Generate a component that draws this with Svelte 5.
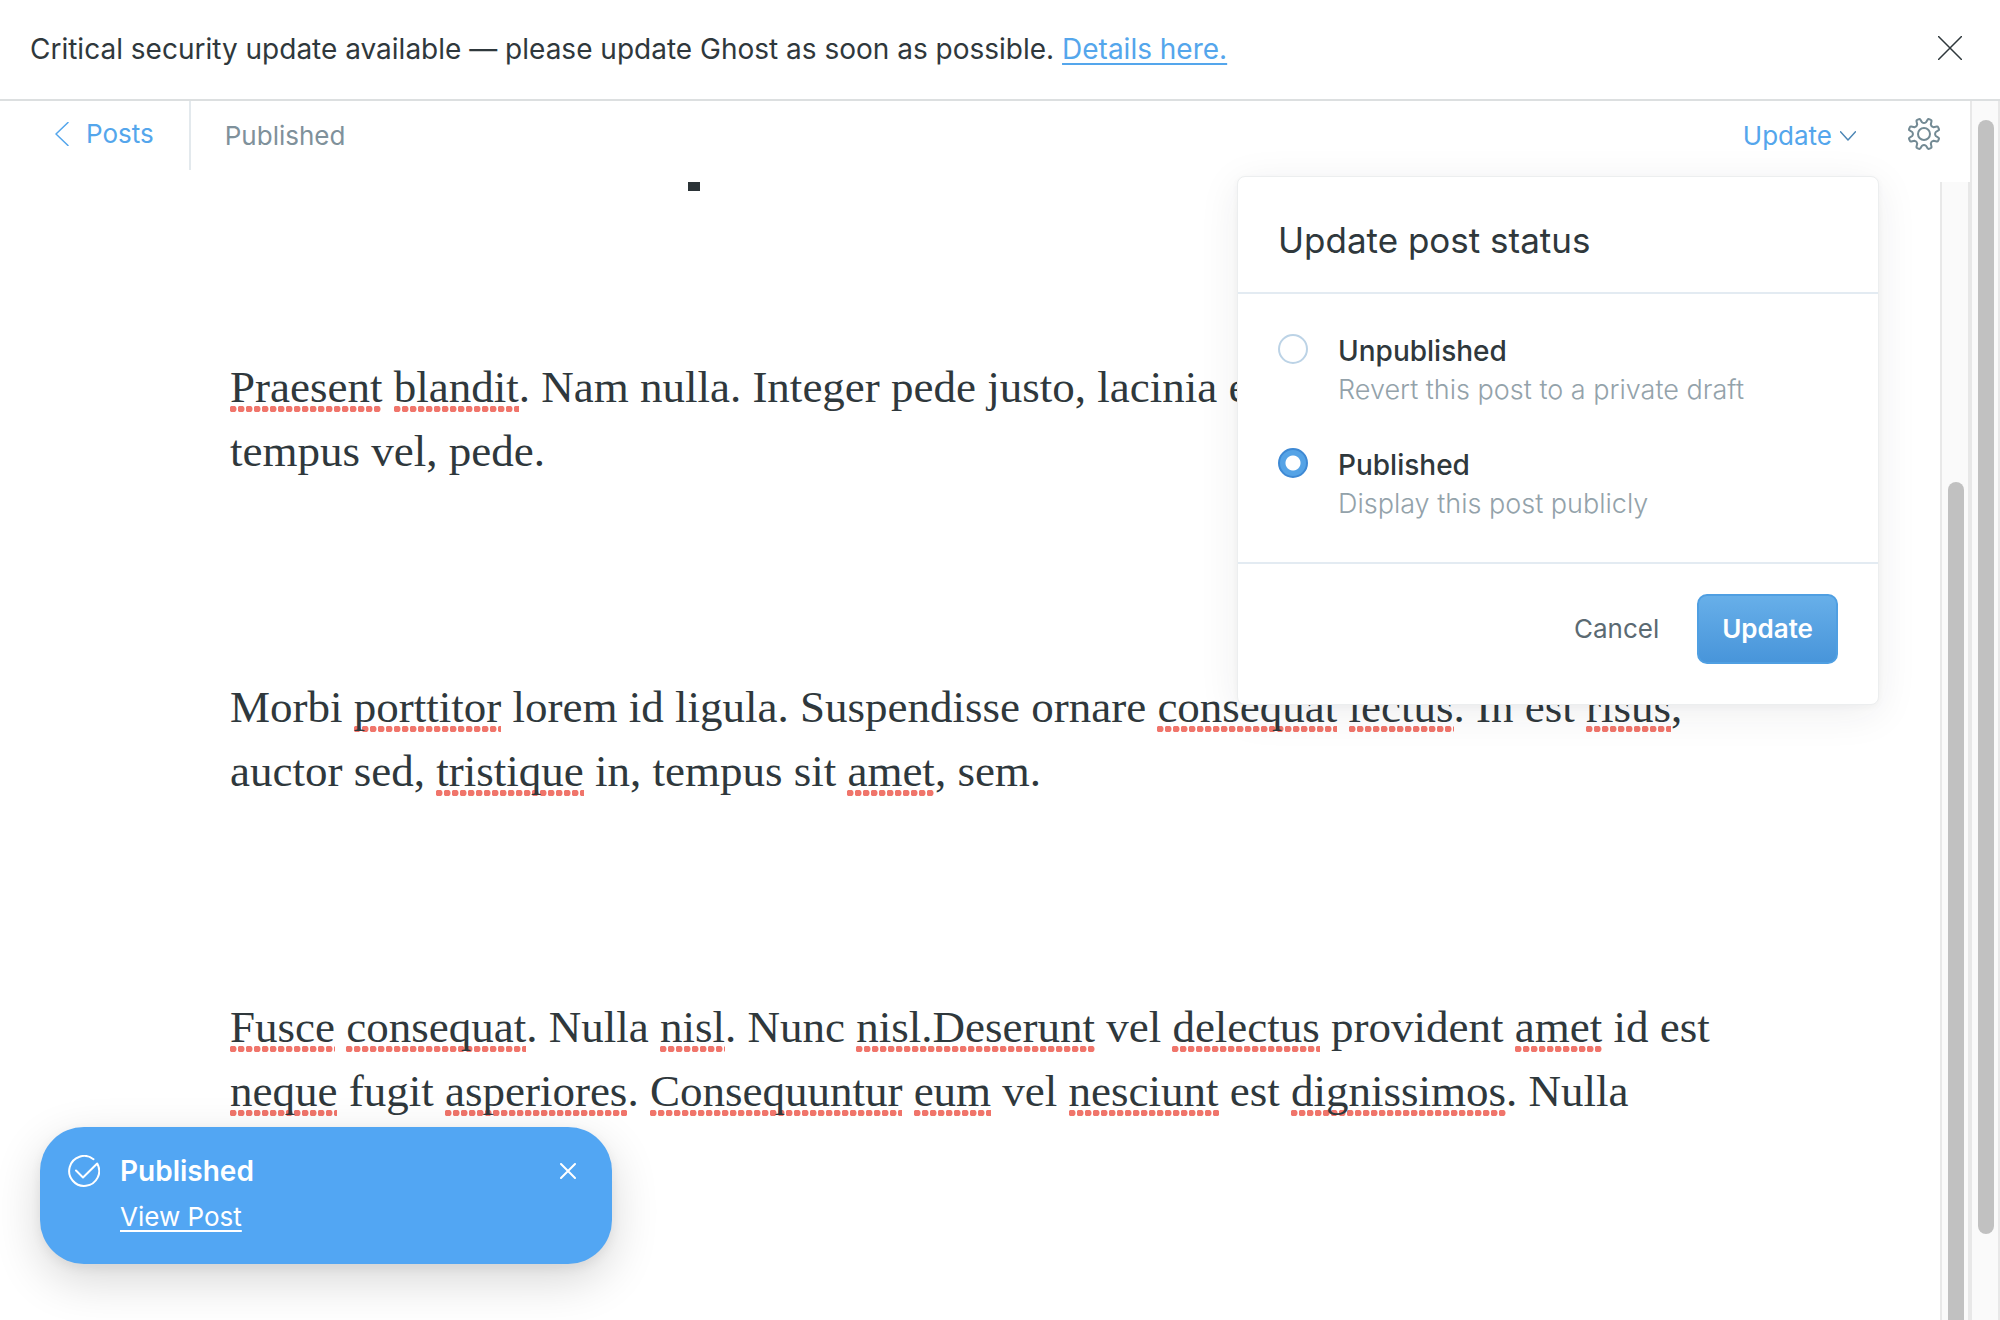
<script>
  let status = $state('published');

  const paragraphs = [
    [
      [['Praesent', 1], [' '], ['blandit', 1], ['. Nam nulla. Integer pede justo, lacinia eget, tincidunt eget,']],
      [['tempus vel, pede.']]
    ],
    [
      [['Morbi '], ['porttitor', 1], [' lorem id ligula. Suspendisse ornare '], ['consequat', 1], [' '], ['lectus', 1], ['. In est '], ['risus', 1], [',']],
      [['auctor sed, '], ['tristique', 1], [' in, tempus sit '], ['amet', 1], [', sem.']]
    ],
    [
      [['Fusce', 1], [' '], ['consequat', 1], ['. Nulla '], ['nisl', 1], ['. Nunc '], ['nisl.Deserunt', 1], [' vel '], ['delectus', 1], [' provident '], ['amet', 1], [' id est']],
      [['neque', 1], [' fugit '], ['asperiores', 1], ['. '], ['Consequuntur', 1], [' '], ['eum', 1], [' vel '], ['nesciunt', 1], [' est '], ['dignissimos', 1], ['. Nulla']]
    ]
  ];

  const options = [
    { value: 'unpublished', label: 'Unpublished', note: 'Revert this post to a private draft' },
    { value: 'published', label: 'Published', note: 'Display this post publicly' }
  ];
</script>

<div class="app">
  <aside class="banner">
    <p>Critical security update available — please update Ghost as soon as possible. <a href="#details">Details here.</a></p>
    <button class="icon-button" aria-label="Close alert">
      <svg class="thin" width="24" height="24" viewBox="0 0 24 24"><path d="M0.5 0.5l23 23M23.5 0.5l-23 23" /></svg>
    </button>
  </aside>

  <div class="workspace">
    <main class="editor">
      <header class="toolbar">
        <a class="back" href="#posts">
          <svg class="thin" width="14" height="24" viewBox="0 0 14 24"><path d="M13 0.5L1 12l12 11.500" /></svg>
          Posts
        </a>
        <span class="state">Published</span>
        <button class="update-trigger">
          Update
          <svg class="thin" width="16" height="10" viewBox="0 0 16 10"><path d="M0.5 0.8L8 9l7.500-8.200" /></svg>
        </button>
        <button class="icon-button gear" aria-label="Settings">
          <svg width="32" height="32" viewBox="0 0 32 32">
            <circle cx="16" cy="16" r="6" />
            <path d="M14 4.200L12.300 1.600Q11.900 .8 11 1.100L9.200 1.900Q8.300 2.300 8.500 3.200L9.200 6.500Q8.800 8.800 6.500 9.200L3.200 8.500Q2.300 8.300 1.900 9.200L1.100 11Q.8 11.900 1.600 12.300L4.200 14Q5.600 16 4.200 18L1.600 19.700Q.8 20.100 1.100 21L1.900 22.800Q2.300 23.700 3.200 23.500L6.500 22.800Q8.800 23.200 9.200 25.500L8.500 28.800Q8.300 29.700 9.200 30.100L11 30.900Q11.900 31.200 12.300 30.400L14 27.800Q16 26.400 18 27.800L19.700 30.400Q20.100 31.200 21 30.900L22.800 30.100Q23.700 29.700 23.500 28.800L22.800 25.500Q23.200 23.200 25.500 22.800L28.800 23.500Q29.700 23.700 30.100 22.800L30.900 21Q31.200 20.100 30.400 19.700L27.800 18Q26.400 16 27.800 14L30.400 12.300Q31.200 11.900 30.900 11L30.100 9.200Q29.700 8.300 28.800 8.500L25.500 9.200Q23.200 8.800 22.800 6.500L23.500 3.200Q23.700 2.300 22.800 1.900L21 1.100Q20.100 .8 19.700 1.600L18 4.200Q16 5.600 14 4.200Z" />
          </svg>
        </button>
      </header>

      <div class="scroller">
        <article class="content">
          <span class="mark"></span>
          {#each paragraphs as lines}
            <p>
              {#each lines as line}
                <span class="line">{#each line as [text, flagged]}<span class:flagged>{text}</span>{/each}</span>
              {/each}
            </p>
          {/each}
        </article>
        <div class="track inner"><div class="thumb"></div></div>
      </div>

      <form class="popup" onsubmit={(e) => e.preventDefault()}>
        <h2>Update post status</h2>
        <div class="options">
          {#each options as option}
            <label>
              <input type="radio" name="status" value={option.value} bind:group={status} />
              <span class="option-text">
                <strong>{option.label}</strong>
                <small>{option.note}</small>
              </span>
            </label>
          {/each}
        </div>
        <footer>
          <button type="button" class="cancel">Cancel</button>
          <button type="submit" class="primary">Update</button>
        </footer>
      </form>
    </main>
    <div class="track outer"><div class="thumb"></div></div>
  </div>

  <div class="toast" role="status">
    <svg width="32" height="32" viewBox="0 0 32 32"><path d="M25.500 4.200A15 15 0 1 0 29.200 8.500L15 22.500L8 15.500" /></svg>
    <div class="toast-text">
      <strong>Published</strong>
      <a href="#view">View Post</a>
    </div>
    <button class="icon-button" aria-label="Dismiss">
      <svg width="16" height="16" viewBox="0 0 16 16"><path d="M1 1l14 14M15 1l-14 14" /></svg>
    </button>
  </div>
</div>

<style>
  :global(body) {
    margin: 0;
    background: #fff;
  }
  .app {
    position: relative;
    display: flex;
    flex-direction: column;
    height: 100vh;
    overflow: hidden;
    color: #2f383c;
    font-family: Inter, 'Liberation Sans', sans-serif;
    font-size: 26px;
    line-height: 32px;
  }
  p, h2 {
    margin: 0;
    font-weight: 400;
  }
  button {
    padding: 0;
    border: 0;
    background: none;
    color: inherit;
    font: inherit;
    cursor: pointer;
  }
  svg {
    display: block;
    fill: none;
    stroke: currentColor;
    stroke-width: 2;
    stroke-linecap: round;
    stroke-linejoin: round;
  }
  .thin {
    stroke-width: 1.5;
  }
  a {
    color: #54a6ec;
    text-underline-offset: 4px;
    text-decoration-thickness: 2px;
  }
  .banner {
    display: flex;
    align-items: center;
    justify-content: space-between;
    padding: 32px 38px 32px 30px;
    border-bottom: 2px solid #dcdfe0;
    font-size: 28px;
    line-height: 35px;
  }
  .banner .icon-button {
    padding-bottom: 3px;
  }
  .workspace {
    display: flex;
    flex: 1;
    min-height: 0;
  }
  .editor {
    position: relative;
    display: flex;
    flex: 1;
    flex-direction: column;
    min-width: 0;
  }
  .toolbar {
    display: flex;
    align-items: center;
    height: 69px;
    padding: 0 30px 12px 0;
  }
  .back {
    box-sizing: border-box;
    display: flex;
    align-items: center;
    gap: 17px;
    height: 69px;
    padding: 0 35px 3px 55px;
    border-right: 2px solid #e3e9ed;
    text-decoration: none;
  }
  .state {
    margin-right: auto;
    padding-left: 34px;
    color: #7f919b;
  }
  .update-trigger {
    display: flex;
    align-items: center;
    gap: 8px;
    margin-right: 52px;
    color: #54a6ec;
  }
  .update-trigger svg {
    color: #4c86b5;
  }
  .gear {
    padding-bottom: 3px;
    color: #738a94;
  }
  .scroller {
    display: flex;
    flex: 1;
    min-height: 0;
  }
  .content {
    flex: 1;
    min-width: 0;
    padding-left: 230px;
    overflow: hidden;
    font-family: Georgia, 'Liberation Serif', serif;
    font-size: 45px;
    line-height: 64px;
  }
  .mark {
    display: block;
    width: 12px;
    height: 9px;
    margin: 0 0 164px 458px;
    background: #2b3337;
  }
  .content p {
    margin-bottom: 192px;
  }
  .line {
    display: block;
    white-space: pre;
  }
  .flagged {
    background: radial-gradient(circle at 3px 3px, #f0756b 3px, transparent 4px) left bottom / 8px 6px repeat-x;
  }
  .track {
    box-sizing: border-box;
    flex: none;
    width: 30px;
    padding: 0 4px 0 6px;
    border: solid #e8e8e8;
    border-width: 0 2px;
    background: #fafafa;
  }
  .thumb {
    border-radius: 8px;
    background: #c1c1c1;
  }
  .inner {
    padding-top: 300px;
  }
  .inner .thumb {
    height: 900px;
  }
  .outer {
    padding-top: 19px;
    padding-bottom: 86px;
  }
  .outer .thumb {
    height: 100%;
  }
  .popup {
    position: absolute;
    top: 75px;
    right: 91px;
    width: 640px;
    border: 1px solid #eceeef;
    border-radius: 8px;
    background: #fff;
    box-shadow: 0 8px 40px rgba(39, 44, 49, 0.08), 0 2px 6px rgba(39, 44, 49, 0.04);
  }
  h2 {
    padding: 43px 40px 31px;
    border-bottom: 2px solid #e3ebf2;
    font-size: 35px;
    line-height: 41px;
  }
  .options {
    display: flex;
    flex-direction: column;
    gap: 36px;
    padding: 38px 40px;
    border-bottom: 2px solid #e3ebf2;
  }
  label {
    display: flex;
    gap: 30px;
  }
  input {
    box-sizing: border-box;
    appearance: none;
    flex: none;
    width: 30px;
    height: 30px;
    margin: 2px 0 0;
    border: 2px solid #bcd3e6;
    border-radius: 50%;
    background: #fff;
  }
  input:checked {
    border-color: #3e89d4;
    background: radial-gradient(circle, #fff 7px, #55a3e6 8px);
  }
  .option-text {
    display: flex;
    flex-direction: column;
  }
  .option-text strong {
    font-size: 28px;
    font-weight: 500;
    line-height: 38px;
  }
  small {
    color: #93a2aa;
    font-size: 27px;
    font-weight: 300;
    line-height: 40px;
  }
  footer {
    display: flex;
    align-items: center;
    justify-content: flex-end;
    gap: 38px;
    padding: 30px 40px 40px;
  }
  .cancel {
    color: #5b6a72;
  }
  .primary {
    box-sizing: border-box;
    height: 70px;
    padding: 0 23px;
    border: 2px solid #4f9fe2;
    border-radius: 10px;
    background: linear-gradient(#67afe9, #4895da);
    color: #fff;
    font-weight: 600;
  }
  .toast {
    position: absolute;
    bottom: 56px;
    left: 40px;
    box-sizing: border-box;
    display: flex;
    align-items: flex-start;
    width: 572px;
    padding: 28px 36px 31px 28px;
    border-radius: 44px;
    background: #52a6f3;
    box-shadow: 0 16px 48px rgba(0, 0, 0, 0.16), 0 4px 12px rgba(0, 0, 0, 0.06);
    color: #fff;
  }
  .toast-text {
    display: flex;
    flex: 1;
    flex-direction: column;
    align-items: flex-start;
    gap: 14px;
    padding-left: 20px;
    line-height: 32px;
  }
  .toast-text strong {
    font-size: 28px;
    font-weight: 600;
  }
  .toast-text a {
    color: #fff;
  }
  .toast .icon-button {
    padding-top: 8px;
  }
</style>
